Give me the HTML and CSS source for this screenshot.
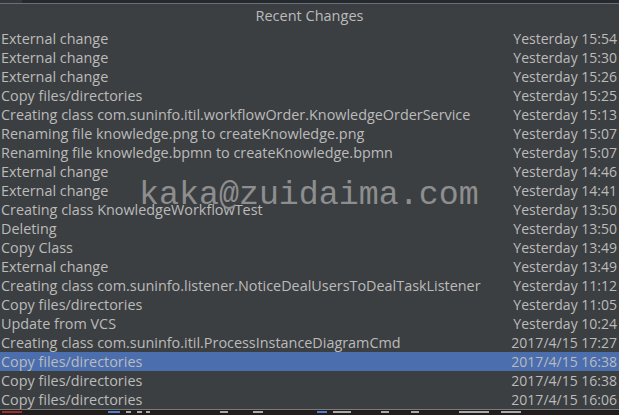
FILE: index.html
```html
<!DOCTYPE html>
<html>
<head>
<meta charset="utf-8">
<link rel="stylesheet" href="styles.css">
</head>
<body>
<div class="topbar"><div class="topbar-left"></div></div>
<div class="panel">
  <div class="title">Recent Changes</div>
  <ul class="list">
    <li class="row"><span class="name">External change</span><span class="time">Yesterday 15:54</span></li>
    <li class="row"><span class="name">External change</span><span class="time">Yesterday 15:30</span></li>
    <li class="row"><span class="name">External change</span><span class="time">Yesterday 15:26</span></li>
    <li class="row"><span class="name">Copy files/directories</span><span class="time">Yesterday 15:25</span></li>
    <li class="row"><span class="name">Creating class com.suninfo.itil.workflowOrder.KnowledgeOrderService</span><span class="time">Yesterday 15:13</span></li>
    <li class="row"><span class="name">Renaming file knowledge.png to createKnowledge.png</span><span class="time">Yesterday 15:07</span></li>
    <li class="row"><span class="name">Renaming file knowledge.bpmn to createKnowledge.bpmn</span><span class="time">Yesterday 15:07</span></li>
    <li class="row"><span class="name">External change</span><span class="time">Yesterday 14:46</span></li>
    <li class="row"><span class="name">External change</span><span class="time">Yesterday 14:41</span></li>
    <li class="row"><span class="name">Creating class KnowledgeWorkflowTest</span><span class="time">Yesterday 13:50</span></li>
    <li class="row"><span class="name">Deleting</span><span class="time">Yesterday 13:50</span></li>
    <li class="row"><span class="name">Copy Class</span><span class="time">Yesterday 13:49</span></li>
    <li class="row"><span class="name">External change</span><span class="time">Yesterday 13:49</span></li>
    <li class="row"><span class="name">Creating class com.suninfo.listener.NoticeDealUsersToDealTaskListener</span><span class="time">Yesterday 11:12</span></li>
    <li class="row"><span class="name">Copy files/directories</span><span class="time">Yesterday 11:05</span></li>
    <li class="row"><span class="name">Update from VCS</span><span class="time">Yesterday 10:24</span></li>
    <li class="row"><span class="name">Creating class com.suninfo.itil.ProcessInstanceDiagramCmd</span><span class="time">2017/4/15 17:27</span></li>
    <li class="row selected"><span class="name">Copy files/directories</span><span class="time">2017/4/15 16:38</span></li>
    <li class="row"><span class="name">Copy files/directories</span><span class="time">2017/4/15 16:38</span></li>
    <li class="row"><span class="name">Copy files/directories</span><span class="time">2017/4/15 16:06</span></li>
  </ul>
  <div class="watermark">kaka@zuidaima.com</div>
</div>
<div class="bottom">
  <i class="frag red" style="width:20px"></i>
  <i class="gap" style="width:86px"></i>
  <i class="frag blue" style="width:12px"></i>
  <i class="gap" style="width:6px"></i>
  <i class="frag" style="width:5px"></i>
  <i class="gap" style="width:6px"></i>
  <i class="frag" style="width:5px"></i>
  <i class="gap" style="width:4px"></i>
  <i class="frag" style="width:4px"></i>
  <i class="gap" style="width:70px"></i>
  <i class="frag" style="width:8px"></i>
  <i class="gap" style="width:25px"></i>
  <i class="frag" style="width:10px"></i>
  <i class="gap" style="width:54px"></i>
  <i class="frag blue" style="width:10px"></i>
  <i class="gap" style="width:6px"></i>
  <i class="frag" style="width:18px"></i>
  <i class="gap" style="width:30px"></i>
  <i class="frag" style="width:8px"></i>
  <i class="gap" style="width:22px"></i>
  <i class="frag" style="width:8px"></i>
  <i class="gap" style="width:40px"></i>
  <i class="frag" style="width:30px"></i>
  <i class="gap" style="width:12px"></i>
  <i class="frag" style="width:20px"></i>
</div>
</body>
</html>
```

FILE: styles.css
```css
html, body {
  margin: 0;
  padding: 0;
}
body {
  width: 619px;
  height: 415px;
  overflow: hidden;
  background: #3c3f41;
  font-family: "Open Sans", "Noto Sans", sans-serif;
  color: #bbbbbb;
  display: flex;
  flex-direction: column;
}
.topbar {
  height: 3px;
  background: #252a30;
  border-bottom: 1px solid #6b6f73;
  display: flex;
}
.topbar-left {
  width: 22px;
  background: #34383c;
}
.panel {
  position: relative;
  flex: 1;
  display: flex;
  flex-direction: column;
  overflow: hidden;
}
.title {
  height: 25px;
  line-height: 24px;
  text-align: center;
  font-size: 14.5px;
}
.list {
  list-style: none;
  margin: 0;
  padding: 0;
}
.row {
  height: 19px;
  display: flex;
  justify-content: space-between;
  align-items: center;
  padding: 0 2px 0 1px;
  font-size: 14.4px;
  white-space: nowrap;
}
.time {
  font-size: 14px;
}
.row.selected {
  background: #4b6eaf;
}
.watermark {
  position: absolute;
  left: 139px;
  top: 172px;
  font-family: "Liberation Mono", "DejaVu Sans Mono", monospace;
  font-size: 33.3px;
  color: #8d8e8f;
}
.bottom {
  height: 5px;
  border-top: 1px solid #7a7a7a;
  background: #231c1c;
  display: flex;
  align-items: flex-start;
  padding-left: 2px;
  overflow: hidden;
}
.bottom i {
  display: block;
  height: 2px;
  margin-top: 1px;
  flex: none;
}
.frag {
  background: #a9a9a9;
}
.frag.red {
  background: #9a3030;
}
.frag.blue {
  background: #4f7fd0;
}
```
